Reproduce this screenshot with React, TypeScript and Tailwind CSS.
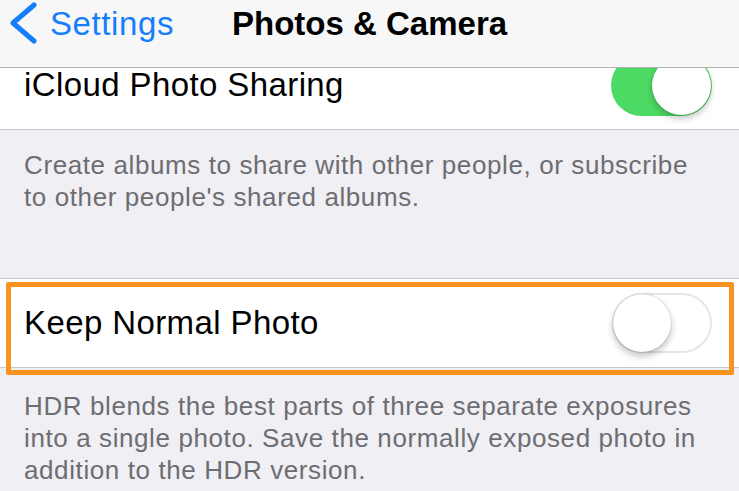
import React from 'react';

function Toggle({ on }: { on: boolean }) {
  if (on) {
    return (
      <div className="relative h-[61px] w-[101px] rounded-full bg-[#4cd964]">
        <div className="absolute right-[1px] top-[1px] h-[59px] w-[59px] rounded-full bg-white shadow-[0_4px_6px_rgba(0,0,0,0.22),0_0_1px_rgba(0,0,0,0.3)]" />
      </div>
    );
  }
  return (
    <div className="relative h-[60px] w-[100px] rounded-full border-[2px] border-[#e6e6e6] bg-white">
      <div className="absolute -left-[1px] -top-[1px] h-[58px] w-[58px] rounded-full bg-white shadow-[0_4px_7px_rgba(0,0,0,0.25),0_0_1px_rgba(0,0,0,0.35)]" />
    </div>
  );
}

export default function App() {
  return (
    <div
      className="relative h-[491px] w-[739px] overflow-hidden bg-[#efeff4]"
      style={{ fontFamily: '"Liberation Sans", Arial, sans-serif' }}
    >
      {/* nav bar */}
      <div className="absolute left-0 top-0 z-10 flex h-[68px] w-full items-start border-b border-[#b2b2b2] bg-[#f7f7f7]">
        <svg width="30" height="44" viewBox="0 0 30 44" className="ml-[7px] mt-[1px]">
          <path d="M27 4 L6 22 L27 40" fill="none" stroke="#157efb" strokeWidth="5" strokeLinecap="round" strokeLinejoin="round" />
        </svg>
        <span className="ml-[13px] mt-[7px] text-[33px] leading-none tracking-[0.6px] text-[#157efb]">Settings</span>
        <span className="ml-[58px] mt-[7px] text-[33px] font-bold leading-none text-black">Photos &amp; Camera</span>
      </div>

      {/* scrolled content */}
      <div className="pt-[41px]">
        <div className="flex h-[89px] items-center justify-between border-b border-[#c8c7cc] bg-white pl-[24px] pr-[27px]">
          <span className="text-[33px] tracking-[0.4px] text-black">iCloud Photo Sharing</span>
          <Toggle on />
        </div>

        <div className="h-[148px] pl-[24px] pr-[30px] pt-[19px] text-[26px] leading-[32px] tracking-[0.6px] text-[#6d6d72]">
          Create albums to share with other people, or subscribe to other people's shared albums.
        </div>

        <div className="relative">
          <div className="flex h-[90px] items-center justify-between border-y border-[#c8c7cc] bg-white pl-[24px] pr-[27px]">
            <span className="text-[33px] tracking-[0.4px] text-black">Keep Normal Photo</span>
            <Toggle on={false} />
          </div>
          <div className="pointer-events-none absolute left-[6px] top-[4px] h-[93px] w-[728px] rounded-[2px] border-[5px] border-[#f7931e]" />
        </div>

        <div className="pl-[24px] pr-[30px] pt-[22px] text-[26px] leading-[32px] tracking-[0.6px] text-[#6d6d72]">
          HDR blends the best parts of three separate exposures into a single photo. Save the normally exposed photo in addition to the HDR version.
        </div>
      </div>
    </div>
  );
}
